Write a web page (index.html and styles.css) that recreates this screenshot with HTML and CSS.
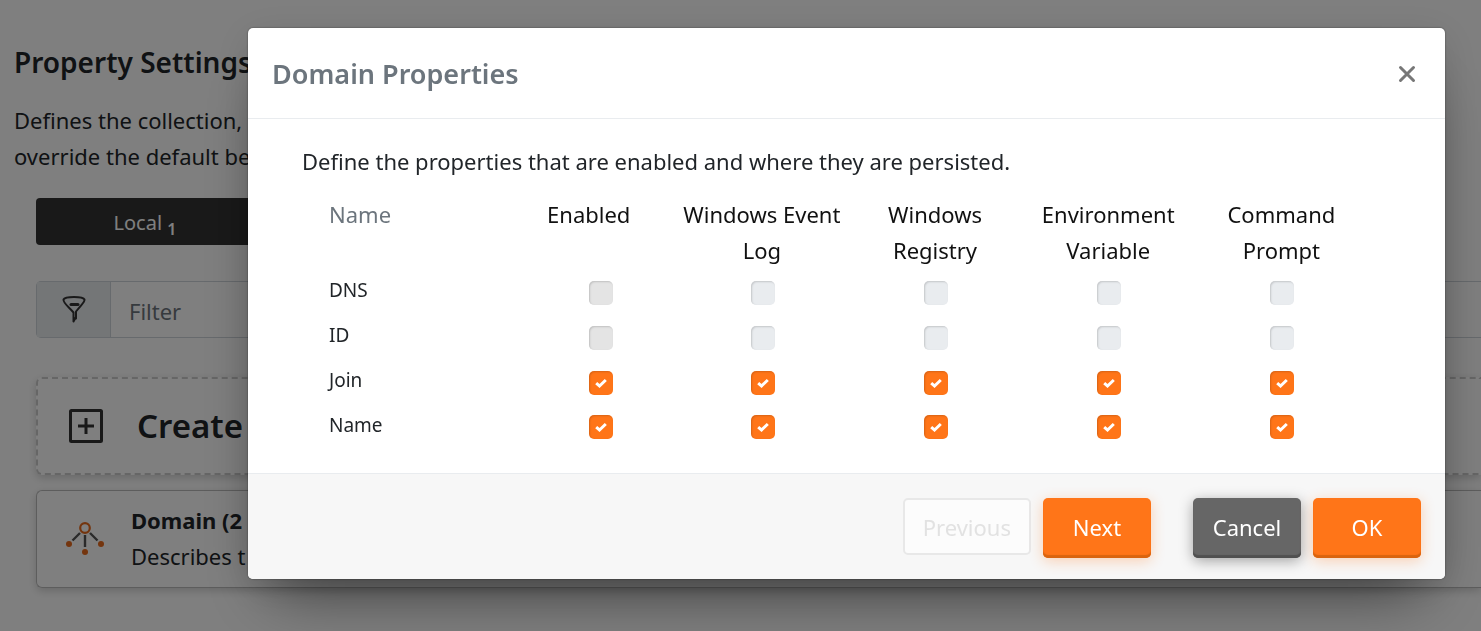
FILE: index.html
```html
<!DOCTYPE html>
<html lang="en">
<head>
<meta charset="utf-8">
<title>Property Settings</title>
<link rel="stylesheet" href="styles.css">
</head>
<body>
<main class="page">
  <h1 class="page-title">Property Settings</h1>
  <p class="page-intro">Defines the collection,<br>override the default be</p>
  <div class="content">
    <button class="tab" type="button">Local <sub class="tab-count">1</sub></button>
    <div class="filter">
      <label class="filter-icon" for="filter" aria-label="Filter">
        <svg width="26" height="30" viewBox="0 0 26 30" fill="none" stroke="#333" stroke-width="2" stroke-linecap="round" stroke-linejoin="round">
          <path d="M2.500 4.500C4 1 22 1 23.500 4.500C24 7 21 9 15 16.500V22L12.500 26.500V17.500C8 12 2 8 2.500 4.500Z"/>
          <path d="M10 9.500h7" stroke-width="3"/><path d="M15 22.500v1"/>
        </svg>
      </label>
      <input class="filter-input" id="filter" type="text" placeholder="Filter">
    </div>
    <section class="card card-create">
      <svg class="card-icon" width="34" height="34" viewBox="0 0 34 34" fill="none" stroke="#333" stroke-width="3">
        <rect x="1.500" y="1.500" width="31" height="31" rx="1"/><path d="M9 17h16M17 9v16"/>
      </svg>
      <h2 class="create-title">Create</h2>
    </section>
    <section class="card card-domain">
      <svg class="card-icon" width="40" height="40" viewBox="0 0 40 40" fill="none">
        <path d="M15 14L7.500 21.500M20 16v12M25 14L32.500 21.500" stroke="#555" stroke-width="2.400"/>
        <circle cx="20" cy="9" r="4.800" stroke="#e86a1c" stroke-width="2.200"/>
        <g fill="#e86a1c"><circle cx="4" cy="25" r="3"/><circle cx="20" cy="33" r="3"/><circle cx="36" cy="25" r="3"/></g>
      </svg>
      <div>
        <h3 class="domain-title">Domain (2</h3>
        <p class="domain-text">Describes t</p>
      </div>
    </section>
  </div>
</main>

<div class="backdrop">
  <div class="modal" role="dialog" aria-modal="true" aria-labelledby="dialog-title">
    <header class="modal-header">
      <h2 class="modal-title" id="dialog-title">Domain Properties</h2>
      <button class="close" type="button" aria-label="Close">
        <svg width="18" height="18" viewBox="0 0 18 18" stroke="#777" stroke-width="3" stroke-linecap="round"><path d="M2.500 2.500l13 13M15.500 2.500l-13 13"/></svg>
      </button>
    </header>
    <div class="modal-body">
      <p class="lead">Define the properties that are enabled and where they are persisted.</p>
      <table class="grid">
        <thead>
          <tr><th class="name">Name</th><th>Enabled</th><th>Windows Event Log</th><th>Windows Registry</th><th>Environment Variable</th><th>Command Prompt</th></tr>
        </thead>
        <tbody>
          <tr><th class="name" scope="row">DNS</th>
            <td><input class="check" type="checkbox" disabled aria-label="DNS enabled"></td>
            <td><input class="check" type="checkbox" disabled aria-label="DNS event log"></td>
            <td><input class="check" type="checkbox" disabled aria-label="DNS registry"></td>
            <td><input class="check" type="checkbox" disabled aria-label="DNS variable"></td>
            <td><input class="check" type="checkbox" disabled aria-label="DNS prompt"></td></tr>
          <tr><th class="name" scope="row">ID</th>
            <td><input class="check" type="checkbox" disabled aria-label="ID enabled"></td>
            <td><input class="check" type="checkbox" disabled aria-label="ID event log"></td>
            <td><input class="check" type="checkbox" disabled aria-label="ID registry"></td>
            <td><input class="check" type="checkbox" disabled aria-label="ID variable"></td>
            <td><input class="check" type="checkbox" disabled aria-label="ID prompt"></td></tr>
          <tr><th class="name" scope="row">Join</th>
            <td><input class="check" type="checkbox" checked aria-label="Join enabled"></td>
            <td><input class="check" type="checkbox" checked aria-label="Join event log"></td>
            <td><input class="check" type="checkbox" checked aria-label="Join registry"></td>
            <td><input class="check" type="checkbox" checked aria-label="Join variable"></td>
            <td><input class="check" type="checkbox" checked aria-label="Join prompt"></td></tr>
          <tr><th class="name" scope="row">Name</th>
            <td><input class="check" type="checkbox" checked aria-label="Name enabled"></td>
            <td><input class="check" type="checkbox" checked aria-label="Name event log"></td>
            <td><input class="check" type="checkbox" checked aria-label="Name registry"></td>
            <td><input class="check" type="checkbox" checked aria-label="Name variable"></td>
            <td><input class="check" type="checkbox" checked aria-label="Name prompt"></td></tr>
        </tbody>
      </table>
    </div>
    <footer class="modal-footer">
      <button class="btn btn-muted" type="button" disabled>Previous</button>
      <button class="btn btn-primary" type="button">Next</button>
      <button class="btn btn-dark" type="button">Cancel</button>
      <button class="btn btn-primary" type="button">OK</button>
    </footer>
  </div>
</div>
</body>
</html>
```
FILE: styles.css
```css
* { box-sizing: border-box; }
html, body { height: 100%; }
body {
  margin: 0;
  overflow: hidden;
  background: #fff;
  color: #212529;
  font: 22px/36px "Noto Sans", "Open Sans", sans-serif;
}
h1, h2, h3, p { margin: 0; }
button, input { font: inherit; }

.page { padding: 44px 0 0 14px; white-space: nowrap; }
.page-title { font-size: 28px; font-weight: 600; line-height: 36px; }
.page-intro { margin-top: 22px; }
.content { display: flex; flex-direction: column; padding: 24px 0 0 22px; }
.tab {
  align-self: flex-start;
  width: 218px;
  height: 47px;
  padding: 2px 6px 0;
  border: 0;
  border-radius: 4px;
  background: #333;
  color: #fff;
  font-size: 20px;
}
.tab-count { font-size: 16px; font-weight: 600; line-height: 0; }

.filter {
  display: flex;
  height: 57px;
  margin-top: 36px;
  border: 1px solid #ced4da;
  border-right: 0;
  border-radius: 5px 0 0 5px;
}
.filter-icon {
  display: flex;
  align-items: center;
  justify-content: center;
  width: 74px;
  border-right: 1px solid #ced4da;
  background: #e9ecef;
}
.filter-input { flex: 1; min-width: 0; padding: 2px 18px 0; border: 0; background: none; }
.filter-input::placeholder { color: #6c757d; opacity: 1; }

.card {
  display: flex;
  align-items: center;
  height: 98px;
  border: 1px solid #bbb;
  border-right: 0;
  border-radius: 6px 0 0 6px;
  box-shadow: 0 3px 8px rgba(0, 0, 0, .18);
}
.card-icon { flex: none; }
.card-create { gap: 34px; margin-top: 39px; padding-left: 31px; border: 2px dashed #ccc; border-right: 0; }
.create-title { font-size: 33px; font-weight: 600; }
.card-domain { gap: 26px; margin-top: 15px; padding-left: 28px; }
.domain-title { font-size: 22px; font-weight: 700; line-height: 36px; }
.domain-text { line-height: 36px; padding-bottom: 2px; }

.backdrop {
  position: fixed;
  inset: 0;
  padding: 28px 36px 0 248px;
  background: rgba(0, 0, 0, .5);
}
.modal {
  border-radius: 5px;
  background: #fff;
  box-shadow: 0 0 2px rgba(0, 0, 0, .5), 0 36px 60px -24px rgba(0, 0, 0, .5), 0 8px 40px rgba(0, 0, 0, .12);
}
.modal-header {
  display: flex;
  align-items: center;
  justify-content: space-between;
  height: 91px;
  padding: 2px 24px 0;
  border-bottom: 1px solid #e9ecef;
}
.modal-title { color: #6c757d; font-size: 27px; font-weight: 600; }
.close { display: flex; padding: 5px; border: 0; background: none; }
.modal-body { padding: 24px 54px; }
.lead { padding-bottom: 17px; }
.grid { width: calc(100% - 50px); margin-left: 27px; table-layout: fixed; border-collapse: collapse; }
.grid th { padding: 0 4px; color: #212529; font-weight: 400; vertical-align: top; }
.grid thead th { height: 74px; color: #111; }
.grid td { height: 45px; padding: 0; text-align: center; vertical-align: middle; }
.grid .name { padding: 0; text-align: left; }
.grid thead .name { color: #6c757d; }
.grid tbody .name { padding-top: 2px; font-size: 19px; }
.grid tbody tr:last-child td { height: 44px; }
.grid td { padding-left: 2px; }
.grid td:nth-child(2) { padding-left: 24px; }

.check {
  display: block;
  width: 24px;
  height: 24px;
  margin: 0 auto;
  appearance: none;
  border-radius: 5px;
  background: #e9ecef;
  box-shadow: inset 1px 1px 2px rgba(0, 0, 0, .16);
}
td:nth-child(2) .check:disabled { background: #e4e4e4; }
.check:checked {
  background: #ff7518 url("data:image/svg+xml,%3Csvg xmlns='http://www.w3.org/2000/svg' viewBox='0 0 12 10'%3E%3Cpath d='M1.200 5.200l3.300 2.800L10.800 2' fill='none' stroke='%23fff' stroke-width='3'/%3E%3C/svg%3E") center / 12px 10px no-repeat;
}

.modal-footer {
  display: flex;
  justify-content: flex-end;
  gap: 12px;
  padding: 24px 24px 21px;
  border-top: 1px solid #e9ecef;
  border-radius: 0 0 5px 5px;
  background: #f7f7f7;
}
.btn {
  min-width: 108px;
  height: 60px;
  padding: 0 19px 3px;
  border: 0;
  border-radius: 5px;
  color: #fff;
}
.btn-primary { background: #ff7518; box-shadow: inset 0 -3px 1px #d9640f, 0 3px 14px rgba(255, 117, 24, .3); }
.btn-dark { margin-left: 30px; background: #666; box-shadow: inset 0 -3px 1px #505050, 0 3px 14px rgba(0, 0, 0, .35); }
.btn-muted { height: 57px; padding: 0 18px; border: 2px solid #e8e8e8; background: #fcfcfc; color: #e2e2e2; }
```
